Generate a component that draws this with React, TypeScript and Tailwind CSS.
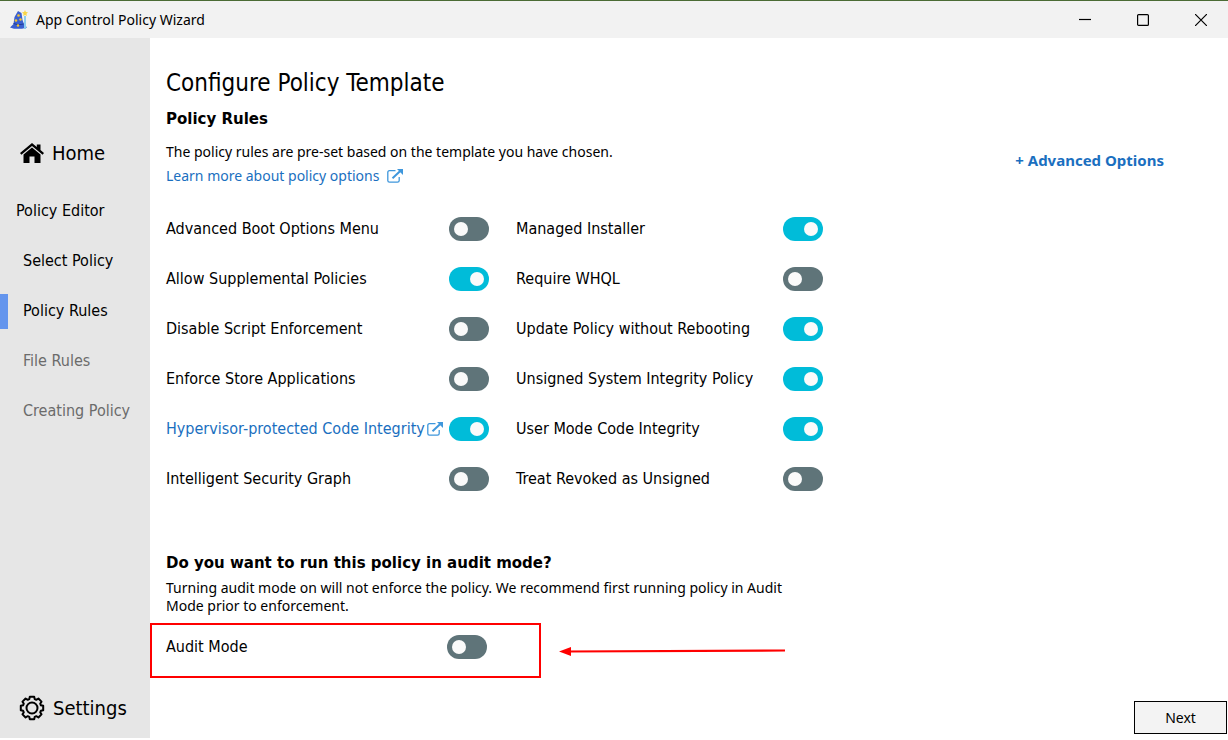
import type { ReactNode } from "react";

interface Rule {
  id: string;
  label: string;
  on: boolean;
  href?: string;
}

const rules: Rule[] = [
  { id: "boot-menu", label: "Advanced Boot Options Menu", on: false },
  { id: "managed-installer", label: "Managed Installer", on: true },
  { id: "supplemental", label: "Allow Supplemental Policies", on: true },
  { id: "whql", label: "Require WHQL", on: false },
  { id: "script", label: "Disable Script Enforcement", on: false },
  { id: "no-reboot", label: "Update Policy without Rebooting", on: true },
  { id: "store-apps", label: "Enforce Store Applications", on: false },
  { id: "unsigned", label: "Unsigned System Integrity Policy", on: true },
  { id: "hvci", label: "Hypervisor-protected Code Integrity", on: true, href: "#hvci" },
  { id: "umci", label: "User Mode Code Integrity", on: true },
  { id: "isg", label: "Intelligent Security Graph", on: false },
  { id: "revoked", label: "Treat Revoked as Unsigned", on: false },
];

const steps = [
  { label: "Select Policy", active: false, enabled: true },
  { label: "Policy Rules", active: true, enabled: true },
  { label: "File Rules", active: false, enabled: false },
  { label: "Creating Policy", active: false, enabled: false },
];

function WizardIcon() {
  return (
    <svg width="18" height="20" viewBox="0 0 18 20" aria-hidden="true">
      <path d="M0 17.500 3.500 14 4.500 7 8 1 11.500 3 12.500 10 14 14 17 17.500 12 18.800 4 18.800Z" fill="#3a5fd0" />
      <path d="M3.500 13.500q5 2.500 10 .5" stroke="#223c94" fill="none" />
      <circle cx="8.500" cy="5.500" r="1.300" fill="#f5c531" />
      <circle cx="6" cy="10.500" r="1.300" fill="#f5c531" />
      <circle cx="10.500" cy="9.500" r="1.200" fill="#f5c531" />
      <circle cx="8" cy="15.500" r="1.200" fill="#f5c531" />
      <path d="M15 6v13" stroke="#8ccdf0" strokeWidth="2" />
      <path d="m15 0 .9 2 2.100.3-1.500 1.500.3 2.200-1.800-1-1.800 1 .3-2.200L12 2.300l2.100-.3z" fill="#f8d648" />
    </svg>
  );
}

function HomeIcon() {
  return (
    <svg width="24" height="20" viewBox="0 0 24 20" aria-hidden="true">
      <path d="M12 4.400 3.500 11.600V20H9.500V13.500H14.500V20H20.500V11.600Z" />
      <path d="M12 0 0 10 1.400 11.700 12 2.900 22.600 11.700 24 10 20.500 7V1.500H16.800V4Z" />
    </svg>
  );
}

function GearIcon() {
  return (
    <svg width="26" height="26" viewBox="0 0 26 26" fill="none" stroke="black" strokeWidth="2" strokeLinejoin="round" aria-hidden="true">
      <path d="M10.800 1.800H15.200L15.700 4.100 17.300 4.800 19.400 3.500 22.500 6.600 21.200 8.700 21.900 10.300 24.200 10.800V15.200L21.900 15.700 21.200 17.300 22.500 19.400 19.400 22.500 17.300 21.200 15.700 21.900 15.200 24.200H10.800L10.300 21.900 8.700 21.200 6.600 22.500 3.500 19.400 4.800 17.300 4.100 15.700 1.800 15.200V10.800L4.100 10.300 4.800 8.700 3.500 6.600 6.600 3.500 8.700 4.800 10.300 4.100Z" />
      <circle cx="13" cy="13" r="5.500" />
    </svg>
  );
}

function ExternalIcon() {
  return (
    <svg width="16" height="14" viewBox="0 0 16 14" fill="none" stroke="#3f97dc" className="shrink-0" aria-hidden="true">
      <path d="M8.500 1.700H2.500Q.8 1.700.8 3.400V11.500Q.8 13.200 2.500 13.200H10.500Q12.200 13.200 12.200 11.500V8" strokeWidth="1.300" />
      <path d="M5.500 9.300 13 2.300" strokeWidth="2" />
      <path d="M10 0H16V6Z" fill="#3f97dc" stroke="none" />
    </svg>
  );
}

function Toggle({ id, on, label }: { id: string; on: boolean; label?: string }) {
  return (
    <input
      id={id}
      type="checkbox"
      defaultChecked={on}
      aria-label={label}
      className="flex h-6 w-10 shrink-0 appearance-none items-center rounded-full bg-[#5f7479] px-[5px] before:size-3.5 before:rounded-full before:bg-[#fafafa] checked:justify-end checked:bg-[#00bcd9]"
    />
  );
}

function WindowButton({ label, children }: { label: string; children: ReactNode }) {
  return (
    <button type="button" aria-label={label} className="flex h-full w-[58px] items-center justify-center">
      <svg width="12" height="12" viewBox="0 0 12 12" fill="none" stroke="black" strokeWidth="1.200">
        {children}
      </svg>
    </button>
  );
}

function TitleBar() {
  return (
    <header className="flex h-[38px] items-center overflow-hidden border-t border-[#4b6b35] bg-[#f2f2f2] pl-2.5">
      <WizardIcon />
      <span className="ml-2 font-['Noto_Sans',sans-serif] text-sm">App Control Policy Wizard</span>
      <div className="-mr-0.5 ml-auto flex h-full">
        <WindowButton label="Minimize">
          <path d="M0 5.500H12" />
        </WindowButton>
        <WindowButton label="Maximize">
          <rect x=".6" y=".6" width="10.800" height="10.800" rx="1" />
        </WindowButton>
        <WindowButton label="Close">
          <path d="M0 0 12 12M12 0 0 12" />
        </WindowButton>
      </div>
    </header>
  );
}

function Sidebar() {
  return (
    <nav className="flex w-[150px] shrink-0 flex-col bg-[#e6e6e6] pt-[82px]">
      <a href="#home" className="flex h-[66px] items-center gap-2 pl-5 text-xl">
        <HomeIcon />
        Home
      </a>
      <a href="#editor" className="flex h-[50px] items-center pl-4">Policy Editor</a>
      {steps.map((step) => (
        <a
          key={step.label}
          href="#step"
          className={`flex h-[50px] items-center ${step.enabled ? "text-black" : "text-[#6b6b6b]"}`}
        >
          <span className={`mr-[15px] h-[35px] w-2 ${step.active ? "bg-[#6495ed]" : ""}`} />
          {step.label}
        </a>
      ))}
      <a href="#settings" className="mt-auto flex h-[60px] items-center gap-2 pl-[19px] text-xl">
        <GearIcon />
        Settings
      </a>
    </nav>
  );
}

export default function App() {
  return (
    <div className="flex min-h-screen flex-col bg-white pb-0.5 font-['DejaVu_Sans_Condensed','Noto_Sans',sans-serif] text-base text-black">
      <TitleBar />
      <div className="flex flex-1">
        <Sidebar />
        <main className="flex flex-1 flex-col">
          <div className="flex justify-between pt-[29px] pr-16 pl-4">
            <div>
              <h1 className="text-2xl leading-8">Configure Policy Template</h1>
              <h2 className="mt-2 font-['DejaVu_Sans',sans-serif] text-[15px] leading-6 font-bold">Policy Rules</h2>
              <p className="mt-[11px] font-['Noto_Sans',sans-serif] text-sm leading-5">
                The policy rules are pre-set based on the template you have chosen.
              </p>
              <a href="#learn" className="mt-1 flex items-center gap-2 font-['Noto_Sans',sans-serif] text-sm leading-5 text-[#1a6fc0]">
                Learn more about policy options
                <ExternalIcon />
              </a>
            </div>
            <button
              type="button"
              className="mt-[81px] h-6 self-start font-['Noto_Sans',sans-serif] text-[15px] font-bold text-[#1a6fc0]"
            >
              + Advanced Options
            </button>
          </div>

          <div className="mt-[18px] grid grid-cols-[323px_307px] gap-x-[27px] pl-4">
            {rules.map((rule) => (
              <div key={rule.id} className="flex h-[50px] items-center justify-between">
                {rule.href ? (
                  <a href={rule.href} className="flex items-center gap-0.5 whitespace-nowrap text-[#1a6fc0]">
                    {rule.label}
                    <ExternalIcon />
                  </a>
                ) : (
                  <label htmlFor={rule.id}>{rule.label}</label>
                )}
                <Toggle id={rule.id} on={rule.on} label={rule.href ? rule.label : undefined} />
              </div>
            ))}
          </div>

          <h2 className="mt-[47px] pl-4 font-['DejaVu_Sans',sans-serif] text-[15px] leading-6 font-bold">
            Do you want to run this policy in audit mode?
          </h2>
          <p className="mt-1 max-w-[640px] pl-4 font-['Noto_Sans',sans-serif] text-sm leading-[18px]">
            Turning audit mode on will not enforce the policy. We recommend first running policy in Audit
            Mode prior to enforcement.
          </p>
          <div className="mt-2 flex items-center gap-[18px]">
            <div className="flex h-[55px] w-[391px] items-center justify-between border-2 border-[#ff0000] pr-[52px] pb-2 pl-3.5">
              <label htmlFor="audit">Audit Mode</label>
              <Toggle id="audit" on={false} />
            </div>
            <svg width="226" height="12" viewBox="0 0 226 12" aria-hidden="true">
              <path d="M8 6.500 226 5.500" stroke="#ff0000" strokeWidth="2.200" />
              <path d="M0 6.500 12 2V11Z" fill="#ff0000" />
            </svg>
          </div>

          <div className="mt-auto flex justify-end pr-px pb-1">
            <button
              type="button"
              className="h-[33px] w-[93px] border border-black bg-[#f3f3f3] font-['Noto_Sans',sans-serif] text-sm"
            >
              Next
            </button>
          </div>
        </main>
      </div>
    </div>
  );
}
